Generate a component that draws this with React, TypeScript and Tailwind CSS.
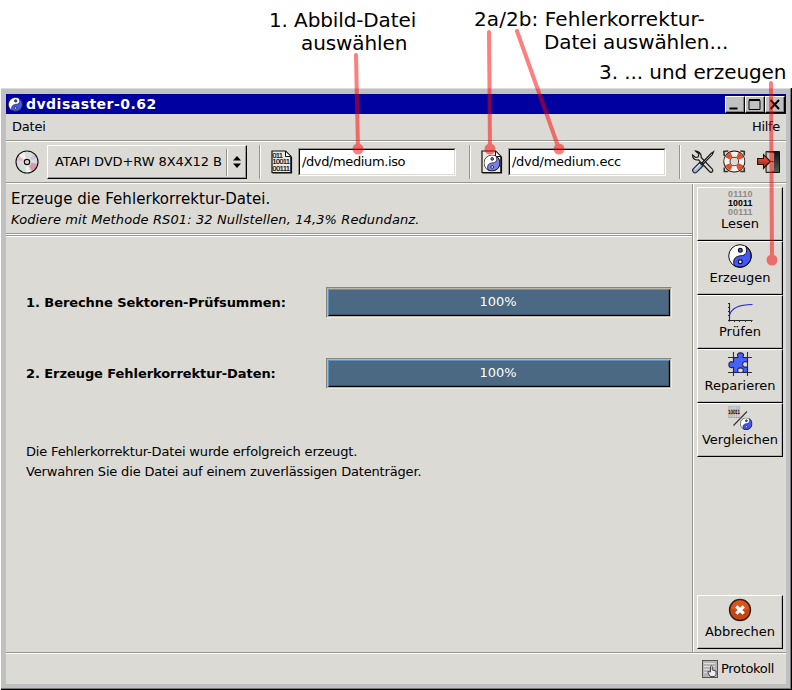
import React from "react";

function YinYang({ className = "", light = false }: { className?: string; light?: boolean }) {
  const blue = light ? "#7482ea" : "#4057ff";
  return (
    <svg viewBox="0 0 24 24" className={className}>
      <circle cx="12" cy="12" r="11.3" fill="#fff" />
      <path d="M17.700 2.200C19.500 6.500 18.800 10.800 14.500 11.500C9.500 12 6.300 13 5.800 17C5.600 18.500 5.800 20 6.200 21.700A11.300 11.300 0 0 0 21.800 17.600A11.300 11.300 0 0 0 17.700 2.200Z" fill={blue} stroke="#111" strokeWidth="1" />
      <circle cx="12" cy="12" r="11.3" fill="none" stroke="#111" strokeWidth="1" />
      <circle cx="12.300" cy="6.200" r="1.900" fill={blue} stroke="#111" strokeWidth="1.200" />
      <circle cx="12.300" cy="17.700" r="1.900" fill="#fff" stroke="#111" strokeWidth="1.200" />
    </svg>
  );
}

function DiscIcon() {
  return (
    <svg viewBox="0 0 24 24" className="h-6 w-6">
      <circle cx="12" cy="12" r="11" fill="#d9d9de" />
      <path d="M12 12L3 6A11 11 0 0 1 9 1.500Z" fill="#f7f2f5" />
      <path d="M12 12L1.200 10A11 11 0 0 1 3.500 5.500Z" fill="#e6b8c4" />
      <path d="M12 12L14 1.300A11 11 0 0 1 19 4Z" fill="#d0e4d6" />
      <path d="M12 12L19 4A11 11 0 0 1 22 8Z" fill="#d3bfe2" />
      <path d="M12 12L23 14A11 11 0 0 1 17 21.500Z" fill="#d39aa4" />
      <path d="M12 12L15 22.500A11 11 0 0 1 10 23Z" fill="#f4f2f4" />
      <path d="M12 12L10 23A11 11 0 0 1 4 19.500Z" fill="#cde2d4" />
      <circle cx="12" cy="12" r="11" fill="none" stroke="#111" strokeWidth="1.100" />
      <circle cx="12" cy="12" r="4.500" fill="#eee" opacity=".8" />
      <circle cx="12" cy="12" r="2.700" fill="#dbdad5" stroke="#111" strokeWidth="1.200" />
    </svg>
  );
}

function PageShape() {
  return (
    <>
      <path d="M1 1H14.500L20 6.500V22.500H1Z" fill="#e9e9e6" stroke="#111" strokeWidth="1.200" />
      <path d="M20.300 7V22.700H1.500" fill="none" stroke="#111" strokeWidth="1.600" />
      <path d="M14.500 1V6.500H20Z" fill="#fff" stroke="#111" />
    </>
  );
}

function IsoIcon() {
  return (
    <svg viewBox="0 0 22 24" className="h-6 w-[22px]">
      <PageShape />
      <g fontFamily="Liberation Sans, sans-serif" fontSize="7" fill="#000" stroke="#000" strokeWidth=".2">
        <text x="1.500" y="7.500" textLength="10.500">011</text>
        <text x="1.500" y="14" textLength="17.500">10011</text>
        <text x="1.500" y="20.800" textLength="17.500">00111</text>
      </g>
    </svg>
  );
}

function EccIcon() {
  return (
    <svg viewBox="0 0 22 24" className="h-6 w-[22px]">
      <PageShape />
      <svg x="2.500" y="4.500" width="17" height="17">
        <YinYang light />
      </svg>
    </svg>
  );
}

function ToolsIcon() {
  return (
    <svg viewBox="0 0 24 24" className="h-6 w-6">
      <path d="M4.500 1L8 4L7 7L4.500 7.500L1.500 5C1.500 8.500 4 10.500 7.500 9.800L18.500 21.500C20.500 23.500 23 21 21.300 19L10.200 7.500C10.500 4 8 1 4.500 1Z" fill="#d9d9d7" stroke="#111" strokeWidth="1.100" />
      <path d="M11 13L20 3.500L22.500 1.800L21.200 4.800L12.300 14Z" fill="#eee" stroke="#111" strokeWidth="1.100" />
      <path d="M8.500 12.500L12 16L5.500 22.300C3.500 24 .5 21 2 19Z" fill="#9db5d8" stroke="#222" strokeWidth="1.100" />
      <path d="M4 19.500L9 14.500" stroke="#d5e1f3" strokeWidth="1.300" />
    </svg>
  );
}

function HelpIcon() {
  return (
    <svg viewBox="0 0 24 24" className="h-6 w-6">
      <g transform="translate(-.7 -.5)">
        <path d="M2 6.500L1.500 2L6 1.500M18 1.500L22 2L22 6M22 18L22 22H18M6 22L2 22V18" fill="none" stroke="#333" strokeWidth="1.600" />
        <circle cx="12" cy="12" r="7.400" fill="none" stroke="#111" strokeWidth="7" />
        <circle cx="12" cy="12" r="7.400" fill="none" stroke="#f5f3ef" strokeWidth="5.400" />
        <circle cx="12" cy="12" r="7.400" fill="none" stroke="#e2512b" strokeWidth="5.400" strokeDasharray="5.600 6.024" strokeDashoffset="-3.012" />
      </g>
    </svg>
  );
}

function ExitIcon() {
  return (
    <svg viewBox="0 0 24 24" className="h-6 w-6">
      <defs>
        <linearGradient id="doorway" x1="0" x2="0" y1="0" y2="1"><stop offset="0" stopColor="#111" /><stop offset="1" stopColor="#4c6650" /></linearGradient>
        <linearGradient id="arrow" x1="0" x2="0" y1="0" y2="1"><stop offset="0" stopColor="#ee6b50" /><stop offset="1" stopColor="#9d1208" /></linearGradient>
      </defs>
      <path d="M9 1.500H22.500V22.500H9Z" fill="url(#doorway)" stroke="#111" />
      <path d="M9.500 2L17 3V21L14 22H9.500Z" fill="#c8c8c4" stroke="#555" strokeWidth=".7" />
      <path d="M.6 8.500H6.500V4.500L13.500 11.500L6.500 18.500V14.500H.6Z" fill="url(#arrow)" stroke="#210" strokeWidth="1.100" />
      <path d="M14.500 11.500h2" stroke="#222" />
    </svg>
  );
}

function BitsIcon() {
  return (
    <svg viewBox="0 0 26 26" className="h-[26px] w-[26px]">
      <g fontFamily="Liberation Sans, sans-serif" fontWeight="700" fontSize="8.800" fill="#8d8c89">
        <text x="1" y="7.500" textLength="24.500">01110</text>
        <text x="1" y="16.500" textLength="24.500" fill="#000">10011</text>
        <text x="1" y="25.500" textLength="24.500">00111</text>
      </g>
    </svg>
  );
}

function CurveIcon() {
  return (
    <svg viewBox="0 0 26 24" className="h-6 w-[26px]">
      <path d="M2.500 5V23.500M1 22.500H25.500" stroke="#222" strokeWidth="1.100" />
      <path d="M1 5.500h1M1 9.500h1M1 13.500h1M1 17.500h1M7.500 22v2M12.500 22v2M18.500 22v2M24.500 22v2" stroke="#333" />
      <path d="M2.500 17C4.500 10 11 6.500 25.500 6.500" fill="none" stroke="#2424e8" strokeWidth="1.200" />
    </svg>
  );
}

function PuzzleIcon() {
  return (
    <svg viewBox="0 0 24 24" className="h-6 w-6">
      <path d="M5.500 0V24M19.500 0V24M0 5.500H24M0 20.500H24" stroke="#333" strokeWidth="1.100" />
      <path d="M5.500 5.500H10C10.500 4.500 9 4 9.500 2.500C10 .3 15 .3 15.500 2.500C16 4 14.500 4.500 15 5.500H19.500V9.500C18.500 10.500 17.500 9.300 16.300 9.800C14 10.800 14 14.300 16.300 15C17.500 15.500 18.500 14.500 19.500 15.500V20.500H15C14.500 19.500 16 18.500 15 17C14 15.500 11 15.500 10 17C9 18.500 10.500 19.500 10 20.500H5.500V15.500C4.500 14.800 4 16 2.500 15.500C.3 14.800.3 10.500 2.500 9.800C4 9.300 4.500 10.500 5.500 10Z" fill="#4860f4" stroke="#17205a" strokeWidth="1.100" />
    </svg>
  );
}

function CompareIcon() {
  return (
    <svg viewBox="0 0 26 26" className="h-[26px] w-[26px]">
      <g fontFamily="Liberation Sans, sans-serif" fontSize="4.500" fill="#888784">
        <text x="1" y="4.500" textLength="12">01110</text>
        <text x="1" y="8.500" textLength="12" fill="#000" stroke="#000" strokeWidth=".2">10011</text>
        <text x="1" y="12.500" textLength="12">00111</text>
      </g>
      <path d="M6.500 20.500L20 6.500" stroke="#333" strokeWidth="1.100" />
      <svg x="13" y="12.500" width="12.500" height="12.500"><YinYang /></svg>
    </svg>
  );
}

function CancelIcon() {
  return (
    <svg viewBox="0 0 24 24" className="h-6 w-6">
      <circle cx="12" cy="12" r="10.500" fill="#c8430e" stroke="#2c1a14" strokeWidth="1.300" />
      <path d="M3 11A9 9 0 0 1 21 11Q12 14 3 11" fill="#e2632b" opacity=".6" />
      <path d="M8.300 8.300L15.700 15.700M15.700 8.300L8.300 15.700" stroke="#fff" strokeWidth="3.300" />
    </svg>
  );
}

function LogIcon() {
  return (
    <svg viewBox="0 0 16 18" className="h-[18px] w-4">
      <rect x=".5" y=".5" width="15" height="17" fill="#b4b4b2" stroke="#555" />
      <path d="M2 3.500h11M2 6.500h11M2 9.500h5M2 12.500h4" stroke="#dededc" />
      <path d="M8.500 12V6.500Q9.500 5 10.300 6.500V10L14 11V14.500L12.500 16.500H8.500L6 13V11.500Z" fill="#eee" stroke="#222" strokeWidth=".8" />
    </svg>
  );
}

function HRule() {
  return <div className="h-[2px] shrink-0 border-t border-[#979590] bg-white" />;
}

function VRule() {
  return <div className="h-[34px] w-[2px] shrink-0 border-l border-[#979590] bg-white" />;
}

function WindowButton({ children }: { children: React.ReactNode }) {
  return (
    <div className="h-[17px] w-5 border border-t-white border-r-black border-b-black border-l-white bg-[#c0c0c0] shadow-[inset_-1px_-1px_0_#808080]">
      <svg viewBox="0 0 18 15" className="h-[15px] w-[18px]">{children}</svg>
    </div>
  );
}

function Entry({ value, className }: { value: string; className: string }) {
  return (
    <div className="h-[28px] w-[158px] shrink-0 border border-t-[#979590] border-r-white border-b-white border-l-[#979590]">
      <div className={`h-full border border-t-black border-r-[#dbdad5] border-b-[#dbdad5] border-l-black bg-white pl-[2px] leading-[24px] ${className}`}>{value}</div>
    </div>
  );
}

function SideButton({ icon, label }: { icon: React.ReactNode; label: string }) {
  return (
    <div className="flex h-[54px] w-[86px] shrink-0 flex-col items-center border border-t-white border-r-black border-b-black border-l-white shadow-[inset_-1px_-1px_0_#b5b4ae]">
      <div className="flex h-[28px] items-center">{icon}</div>
      <div className="leading-[16px]">{label}</div>
    </div>
  );
}

function Progress({ label }: { label: string }) {
  return (
    <div className="flex h-[31px] items-center">
      <div className="w-[300px] font-bold tracking-[-0.07px]">{label}</div>
      <div className="h-[31px] w-[346px] border border-t-[#8a8476] border-r-[#ecebe6] border-b-[#ecebe6] border-l-[#8a8476]">
        <div className="h-full border border-[#bcb6a9]">
          <div className="h-full border border-t-[#5b94c4] border-r-black border-b-black border-l-[#5b94c4] bg-[#4b6983] pr-[2px] text-center leading-[24px] text-white shadow-[inset_-1px_-1px_0_#3b5368]">100%</div>
        </div>
      </div>
    </div>
  );
}

function Annotations() {
  return (
    <div className="pointer-events-none absolute inset-0 text-[20px] leading-[24px]">
      <div className="absolute left-[269px] top-[8px] tracking-[-0.12px]">1. Abbild-Datei</div>
      <div className="absolute left-[301px] top-[31px] tracking-[-0.1px]">auswählen</div>
      <div className="absolute left-[474px] top-[7px] tracking-[0.08px]">2a/2b: Fehlerkorrektur-</div>
      <div className="absolute left-[544px] top-[30px] tracking-[-0.1px]">Datei auswählen...</div>
      <div className="absolute left-[599px] top-[60px] tracking-[-0.08px]">3. ... und erzeugen</div>
      <svg viewBox="0 0 792 690" className="absolute inset-0 h-[690px] w-[792px]">
        <g stroke="#ff0000" strokeWidth="4" strokeLinecap="round" opacity=".5">
          <path d="M356 55L358 149" />
          <path d="M489 32L490 149" />
          <path d="M517 31L559 149" />
          <path d="M771 83L772 260" />
          <g fill="#ff0000" stroke="none">
            <circle cx="358" cy="149" r="5.500" />
            <circle cx="490" cy="149" r="5.500" />
            <circle cx="559" cy="149" r="5.500" />
            <circle cx="772" cy="260" r="5.500" />
          </g>
        </g>
      </svg>
    </div>
  );
}

export default function App() {
  return (
    <div className="relative h-[690px] w-[792px] overflow-hidden whitespace-nowrap bg-white pl-px pt-[88px] font-['DejaVu_Sans',sans-serif] text-[13px] text-black">
      <div className="h-[602px] w-[791px] border-r border-b border-black">
        <div className="flex h-[601px] w-[790px] flex-col border-t border-r border-b border-t-[#dcdcdc] border-r-[#777] border-b-[#777] bg-[#c0c0c0] pt-[5px] pr-1 pb-1 pl-[5px]">
          <div className="flex h-5 shrink-0 items-center bg-[#0000a0] pl-[2px] pr-[1px] text-white">
            <YinYang className="h-[15px] w-[15px]" />
            <div className="ml-[3px] grow text-[14px] font-bold leading-5 tracking-[0.48px]">dvdisaster-0.62</div>
            <div className="flex">
              <WindowButton><path d="M3.500 11.500H11.500" stroke="#000" strokeWidth="2" /></WindowButton>
              <WindowButton><path d="M3 3.500H14V12.500H3ZM3 2.500H14" fill="none" stroke="#000" /></WindowButton>
              <WindowButton><path d="M4.500 3L13 12M13 3L4.500 12" stroke="#000" strokeWidth="2" /></WindowButton>
            </div>
          </div>
          <div className="flex min-h-0 flex-1 flex-col bg-[#dbdad5]">
            <div className="flex h-[26px] shrink-0 items-center justify-between px-[6px]">
              <span className="tracking-[-0.2px]">Datei</span>
              <span className="tracking-[-0.3px]">Hilfe</span>
            </div>
            <HRule />
            <div className="flex h-10 shrink-0 items-center">
              <div className="ml-[9px]"><DiscIcon /></div>
              <div className="ml-2 flex h-[34px] w-[200px] items-center border border-t-white border-r-black border-b-black border-l-white pl-[7px] shadow-[inset_-1px_-1px_0_#979590]">
                <span className="w-[171px] tracking-[-0.08px]">ATAPI DVD+RW 8X4X12 B</span>
                <div className="h-[27px] w-[2px] border-l border-[#979590] bg-white" />
                <svg viewBox="0 0 8 12" className="ml-[5px] h-3 w-2"><path d="M0 4.500L4 0L8 4.500ZM0 7.500L4 12L8 7.500Z" /></svg>
              </div>
              <div className="ml-[12px]"><VRule /></div>
              <div className="ml-[10px]"><IsoIcon /></div>
              <div className="ml-[5px]"><Entry value="/dvd/medium.iso" className="tracking-[-0.38px]" /></div>
              <div className="ml-[13px]"><VRule /></div>
              <div className="ml-[10px]"><EccIcon /></div>
              <div className="ml-[5px]"><Entry value="/dvd/medium.ecc" className="tracking-[-0.26px]" /></div>
              <div className="ml-[13px]"><VRule /></div>
              <div className="ml-[10px] flex gap-2"><ToolsIcon /><HelpIcon /><div className="pl-[2px]"><ExitIcon /></div></div>
            </div>
            <HRule />
            <div className="flex h-[468px] shrink-0">
              <div className="w-[686px] shrink-0">
                <div className="h-[49px] pl-[5px] pt-[5px]">
                  <div className="text-[15px] leading-5 tracking-[0.06px]">Erzeuge die Fehlerkorrektur-Datei.</div>
                  <div className="pt-px italic leading-[20px] tracking-[0.11px]">Kodiere mit Methode RS01: 32 Nullstellen, 14,3% Redundanz.</div>
                </div>
                <HRule />
                <HRule />
                <div className="pl-5 pt-[50px]">
                  <Progress label="1. Berechne Sektoren-Prüfsummen:" />
                  <div className="h-[40px]" />
                  <Progress label="2. Erzeuge Fehlerkorrektur-Daten:" />
                  <div className="mt-[53px] leading-5 tracking-[-0.17px]">
                    <div>Die Fehlerkorrektur-Datei wurde erfolgreich erzeugt.</div>
                    <div>Verwahren Sie die Datei auf einem zuverlässigen Datenträger.</div>
                  </div>
                </div>
              </div>
              <div className="w-[2px] border-l border-[#979590] bg-white" />
              <div className="flex flex-col pb-[3px] pl-[3px] pt-[3px]">
                <SideButton icon={<BitsIcon />} label="Lesen" />
                <SideButton icon={<YinYang className="h-6 w-6" />} label="Erzeugen" />
                <SideButton icon={<CurveIcon />} label="Prüfen" />
                <SideButton icon={<PuzzleIcon />} label="Reparieren" />
                <SideButton icon={<CompareIcon />} label="Vergleichen" />
                <div className="grow" />
                <SideButton icon={<CancelIcon />} label="Abbrechen" />
              </div>
            </div>
            <HRule />
            <div className="flex h-[30px] items-center justify-end pr-[12px]"><LogIcon /><span className="ml-[3px] tracking-[-0.33px]">Protokoll</span></div>
          </div>
        </div>
      </div>
      <Annotations />
    </div>
  );
}
